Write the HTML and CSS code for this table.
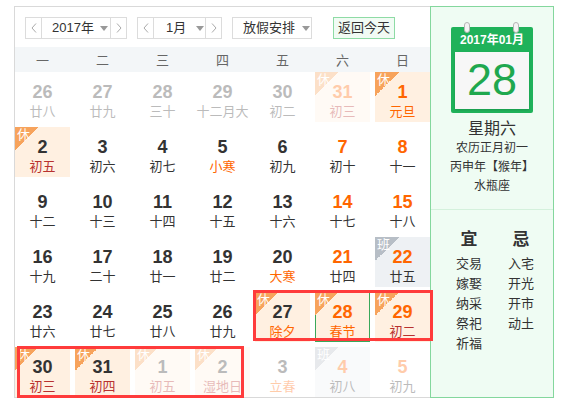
FILE: index.html
```html
<!DOCTYPE html>
<html lang="zh-CN">
<head>
<meta charset="utf-8">
<title>万年历</title>
<link rel="stylesheet" href="styles.css">
</head>
<body>
<div class="wrap">
  <div class="left">
    <div class="toolbar">
      <div class="sel sel-year">
        <span class="arr"><svg width="6" height="10" viewBox="0 0 6 10"><polyline points="5,0.5 1,5 5,9.5" fill="none" stroke="#aaa" stroke-width="1"/></svg></span>
        <span class="val">2017年<i class="caret"></i></span>
        <span class="arr arr-r"><svg width="6" height="10" viewBox="0 0 6 10"><polyline points="1,0.5 5,5 1,9.5" fill="none" stroke="#aaa" stroke-width="1"/></svg></span>
      </div>
      <div class="sel sel-month">
        <span class="arr"><svg width="6" height="10" viewBox="0 0 6 10"><polyline points="5,0.5 1,5 5,9.5" fill="none" stroke="#aaa" stroke-width="1"/></svg></span>
        <span class="val">1月<i class="caret"></i></span>
        <span class="arr arr-r"><svg width="6" height="10" viewBox="0 0 6 10"><polyline points="1,0.5 5,5 1,9.5" fill="none" stroke="#aaa" stroke-width="1"/></svg></span>
      </div>
      <div class="sel sel-hol"><span class="val">放假安排<i class="caret"></i></span></div>
      <div class="today-btn">返回今天</div>
    </div>
    <div class="week">
      <span>一</span><span>二</span><span>三</span><span>四</span><span>五</span><span>六</span><span>日</span>
    </div>
    <div class="grid">
      <div class="cell other"><b>26</b><em>廿八</em></div>
      <div class="cell other"><b>27</b><em>廿九</em></div>
      <div class="cell other"><b>28</b><em>三十</em></div>
      <div class="cell other"><b>29</b><em>十二月大</em></div>
      <div class="cell other"><b>30</b><em>初二</em></div>
      <div class="cell other rest wk"><i class="tag">休</i><b>31</b><em class="red">初三</em></div>
      <div class="cell rest wk"><i class="tag">休</i><b>1</b><em class="fest">元旦</em></div>

      <div class="cell rest"><i class="tag">休</i><b>2</b><em class="red">初五</em></div>
      <div class="cell"><b>3</b><em>初六</em></div>
      <div class="cell"><b>4</b><em>初七</em></div>
      <div class="cell"><b>5</b><em class="fest">小寒</em></div>
      <div class="cell"><b>6</b><em>初九</em></div>
      <div class="cell wk"><b>7</b><em>初十</em></div>
      <div class="cell wk"><b>8</b><em>十一</em></div>

      <div class="cell"><b>9</b><em>十二</em></div>
      <div class="cell"><b>10</b><em>十三</em></div>
      <div class="cell"><b>11</b><em>十四</em></div>
      <div class="cell"><b>12</b><em>十五</em></div>
      <div class="cell"><b>13</b><em>十六</em></div>
      <div class="cell wk"><b>14</b><em>十七</em></div>
      <div class="cell wk"><b>15</b><em>十八</em></div>

      <div class="cell"><b>16</b><em>十九</em></div>
      <div class="cell"><b>17</b><em>二十</em></div>
      <div class="cell"><b>18</b><em>廿一</em></div>
      <div class="cell"><b>19</b><em>廿二</em></div>
      <div class="cell"><b>20</b><em class="fest">大寒</em></div>
      <div class="cell wk"><b>21</b><em>廿四</em></div>
      <div class="cell work wk"><i class="tag">班</i><b>22</b><em>廿五</em></div>

      <div class="cell"><b>23</b><em>廿六</em></div>
      <div class="cell"><b>24</b><em>廿七</em></div>
      <div class="cell"><b>25</b><em>廿八</em></div>
      <div class="cell"><b>26</b><em>廿九</em></div>
      <div class="cell rest"><i class="tag">休</i><b>27</b><em class="fest">除夕</em></div>
      <div class="cell rest wk today"><i class="tag">休</i><b>28</b><em class="fest">春节</em></div>
      <div class="cell rest wk"><i class="tag">休</i><b>29</b><em class="red">初二</em></div>

      <div class="cell rest"><i class="tag">休</i><b>30</b><em class="red">初三</em></div>
      <div class="cell rest"><i class="tag">休</i><b>31</b><em class="red">初四</em></div>
      <div class="cell other rest"><i class="tag">休</i><b>1</b><em class="red">初五</em></div>
      <div class="cell other rest"><i class="tag">休</i><b>2</b><em class="red">湿地日</em></div>
      <div class="cell other"><b>3</b><em class="fest">立春</em></div>
      <div class="cell other work wk"><i class="tag">班</i><b>4</b><em>初八</em></div>
      <div class="cell other wk"><b>5</b><em>初九</em></div>
    </div>
  </div>
  <div class="right">
    <div class="info">
      <div class="pad">
        <span class="ring ring-l"></span><span class="ring ring-r"></span>
        <div class="pad-head">2017年01月</div>
        <div class="pad-body">28</div>
      </div>
      <div class="weekday">星期六</div>
      <div class="line">农历正月初一</div>
      <div class="line">丙申年【猴年】</div>
      <div class="line">水瓶座</div>
    </div>
    <div class="yiji">
      <div class="col">
        <div class="yj-title">宜</div>
        <div>交易</div><div>嫁娶</div><div>纳采</div><div>祭祀</div><div>祈福</div>
      </div>
      <div class="col">
        <div class="yj-title">忌</div>
        <div>入宅</div><div>开光</div><div>开市</div><div>动土</div>
      </div>
    </div>
  </div>
  <div class="mark mark-a"></div>
  <div class="mark mark-b"></div>
</div>
</body>
</html>
```
FILE: styles.css
```css
* { box-sizing: border-box; }
html, body { margin: 0; padding: 0; background: #fff; }
body {
  font-family: "Liberation Sans", "Noto Sans CJK SC", sans-serif;
  color: #333;
}
.wrap {
  position: relative;
  display: flex;
  margin: 6px 0 0 14px;
  width: 540px;
  height: 392px;
}
.left {
  width: 416px;
  border-top: 1px solid #d9d9d9;
  border-left: 1px solid #d9d9d9;
  border-bottom: 1px solid #d9d9d9;
}
.toolbar {
  display: flex;
  align-items: center;
  padding: 10px 0 0 10px;
  height: 32px;
  font-size: 13px;
}
.sel {
  display: flex;
  height: 22px;
  border: 1px solid #dcdcdc;
  background: #fff;
  margin-right: 10px;
  white-space: nowrap;
}
.arr {
  flex: 0 0 16px;
  width: 16px;
  display: flex;
  align-items: center;
  justify-content: center;
  border-right: 1px solid #dcdcdc;
}
.arr-r { border-right: 0; border-left: 1px solid #dcdcdc; }
.val {
  flex: 1;
  display: flex;
  align-items: center;
  line-height: 20px;
  color: #333;
  white-space: nowrap;
  min-width: 0;
}
.sel-year { width: 102px; }
.sel-year .val { padding-left: 10px; }
.sel-year .caret { margin-left: 6px; }
.sel-month { width: 85px; }
.sel-month .val { padding-left: 12px; }
.sel-month .caret { margin-left: 10px; }
.sel-hol { width: 80px; margin-right: 21px; }
.sel-hol .val { padding-left: 10px; }
.sel-hol .caret { margin-left: 7px; }
.caret {
  flex: 0 0 auto;
  width: 0; height: 0;
  border-left: 4px solid transparent;
  border-right: 4px solid transparent;
  border-top: 5px solid #999;
}
.today-btn {
  height: 22px;
  width: 62px;
  border: 1px solid #8edba5;
  background: #f1fbf4;
  line-height: 20px;
  text-align: center;
  font-size: 13px;
  color: #333;
  white-space: nowrap;
}
.week {
  margin-top: 8px;
  height: 25px;
  background: #f3f6f8;
  display: grid;
  grid-template-columns: repeat(7, 55px);
  column-gap: 5px;
  align-items: center;
  font-size: 13px;
  color: #666;
  text-align: center;
}
.grid {
  display: grid;
  grid-template-columns: repeat(7, 55px);
  grid-auto-rows: 50px;
  gap: 5px;
}
.cell {
  position: relative;
  text-align: center;
  padding-top: 9px;
}
.cell b {
  display: block;
  font-family: "Liberation Sans", sans-serif;
  font-weight: bold;
  font-size: 18px;
  line-height: 22px;
  color: #333;
}
.cell em {
  display: block;
  font-style: normal;
  font-size: 13px;
  line-height: 18px;
  color: #333;
}
.cell.wk b { color: #ff6600; }
.cell em.fest { color: #ff6600; }
.cell em.red { color: #b8312f; }
.cell.rest { background: #fff0e1; }
.cell.work { background: #eef1f4; }
.cell.today { border: 1px solid #3aa85a; padding-top: 8px; }
.tag {
  position: absolute;
  left: 0; top: 0;
  width: 24px; height: 24px;
  font-style: normal;
  font-size: 13px;
  line-height: 15px;
  color: #fff;
  text-align: left;
  padding-left: 2px;
  background: linear-gradient(135deg, #f7a35c 50%, transparent 50%);
}
.today .tag { left: -1px; top: -1px; }
.work .tag { background: linear-gradient(135deg, #b7bec6 50%, transparent 50%); }
.cell.other { opacity: 0.33; }
.right {
  width: 124px;
  height: 392px;
  border: 1px solid #84d79d;
  background: #effcf3;
}
.info {
  height: 203px;
  border-bottom: 1px solid #d4f1dc;
  text-align: center;
  padding-top: 20px;
}
.pad {
  position: relative;
  width: 82px;
  height: 86px;
  margin: 0 auto;
  background: #1fb25a;
  border-radius: 2px;
  padding: 0 4px 4px;
  display: flex;
  flex-direction: column;
}
.ring {
  position: absolute;
  top: -5px;
  width: 6px;
  height: 11px;
  border-radius: 3px;
  background: #f4f4f4;
  border: 1px solid #b5b5b5;
}
.ring-l { left: 13px; }
.ring-r { left: 62px; }
.pad-head {
  height: 25px;
  line-height: 27px;
  color: #fff;
  font-size: 12px;
  font-weight: bold;
}
.pad-body {
  flex: 1;
  background: #f7f7f7;
  box-shadow: 0 1px 2px rgba(0,0,0,0.15);
  color: #1fa84f;
  font-family: "Liberation Sans", sans-serif;
  font-size: 45px;
  line-height: 56px;
}
.weekday {
  margin-top: 6px;
  font-size: 16px;
  line-height: 20px;
  color: #333;
}
.line {
  font-size: 12px;
  line-height: 19px;
  color: #333;
}
.yiji {
  display: grid;
  grid-template-columns: 52px 52px;
  padding: 20px 0 0 12px;
  font-size: 13px;
  line-height: 20px;
  color: #333;
  text-align: center;
}
.yj-title {
  font-size: 17px;
  font-weight: bold;
  line-height: 20px;
  margin-bottom: 4px;
}
.mark {
  position: absolute;
  border: 3px solid #ff3b3b;
}
.mark-a { left: 239px; top: 284px; width: 180px; height: 51px; }
.mark-b { left: 3px; top: 340px; width: 227px; height: 52px; }
```
